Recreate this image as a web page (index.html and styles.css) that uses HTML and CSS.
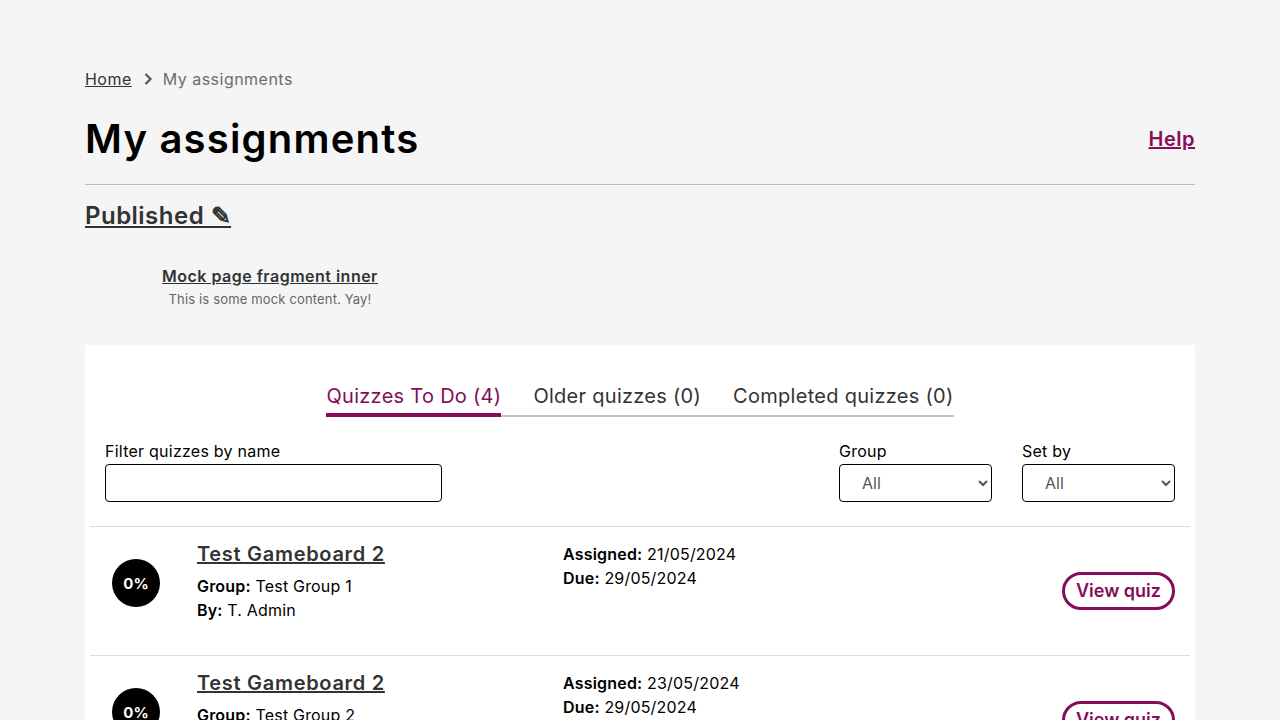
FILE: index.html
```html
<!DOCTYPE html>
<html lang="en">
<head>
<meta charset="utf-8">
<title>My assignments</title>
<link rel="stylesheet" href="styles.css">
</head>
<body>
<div class="page">
  <nav class="breadcrumb">
    <a href="#" class="crumb-link">Home</a>
    <svg class="crumb-sep" width="10" height="14" viewBox="0 0 10 14"><path d="M2.5 2 L7.5 7 L2.5 12" fill="none" stroke="#555" stroke-width="2.2"/></svg>
    <span class="crumb-current">My assignments</span>
  </nav>
  <div class="title-row">
    <h1 class="page-title">My assignments</h1>
    <a href="#" class="help-link">Help</a>
  </div>
  <hr class="title-rule">
  <h2 class="published"><a href="#">Published ✎</a></h2>
  <div class="fragment-row">
    <div class="fragment">
      <a href="#" class="fragment-title">Mock page fragment inner</a>
      <p class="fragment-text">This is some mock content. Yay!</p>
    </div>
  </div>
  <section class="card">
    <ul class="tabs">
      <li class="tab active">Quizzes To Do (4)</li>
      <li class="tab">Older quizzes (0)</li>
      <li class="tab">Completed quizzes (0)</li>
    </ul>
    <div class="filters">
      <label class="field name-field">
        <span class="field-label">Filter quizzes by name</span>
        <input type="text" class="text-input">
      </label>
      <div class="spacer"></div>
      <label class="field select-field">
        <span class="field-label">Group</span>
        <select class="select"><option>All</option></select>
      </label>
      <label class="field select-field">
        <span class="field-label">Set by</span>
        <select class="select"><option>All</option></select>
      </label>
    </div>
    <div class="quiz-list">
      <div class="quiz-row">
        <div class="progress">0%</div>
        <div class="quiz-main">
          <a href="#" class="quiz-title">Test Gameboard 2</a>
          <div class="meta"><b>Group:</b> Test Group 1</div>
          <div class="meta"><b>By:</b> T. Admin</div>
        </div>
        <div class="quiz-dates">
          <div class="meta"><b>Assigned:</b> 21/05/2024</div>
          <div class="meta"><b>Due:</b> 29/05/2024</div>
        </div>
        <div class="quiz-action"><a href="#" class="view-btn">View quiz</a></div>
      </div>
      <div class="quiz-row">
        <div class="progress">0%</div>
        <div class="quiz-main">
          <a href="#" class="quiz-title">Test Gameboard 2</a>
          <div class="meta"><b>Group:</b> Test Group 2</div>
          <div class="meta"><b>By:</b> T. Admin</div>
        </div>
        <div class="quiz-dates">
          <div class="meta"><b>Assigned:</b> 23/05/2024</div>
          <div class="meta"><b>Due:</b> 29/05/2024</div>
        </div>
        <div class="quiz-action"><a href="#" class="view-btn">View quiz</a></div>
      </div>
    </div>
  </section>
</div>
</body>
</html>
```
FILE: styles.css
```css
* { box-sizing: border-box; }
html, body { margin: 0; padding: 0; }
body {
  background: #f5f5f5;
  font-family: Inter, "Noto Sans", sans-serif;
  color: #000;
  font-size: 16px;
}
.page {
  width: 1110px;
  margin: 0 auto;
  padding-top: 67px;
}
.breadcrumb {
  display: flex;
  align-items: center;
  height: 24px;
  font-size: 16px;
  line-height: 24px;
  letter-spacing: 0.03em;
}
.crumb-link { color: #333; text-decoration: underline; }
.crumb-sep { margin: 0 10px 0 11px; }
.crumb-current { color: #686d74; }
.title-row {
  display: flex;
  justify-content: space-between;
  align-items: center;
  margin-top: 24px;
}
.page-title {
  margin: 0;
  font-size: 40px;
  line-height: 48px;
  font-weight: 600;
  letter-spacing: 0.03em;
}
.help-link {
  color: #850d59;
  font-weight: 600;
  font-size: 20px;
  letter-spacing: 0.025em;
  text-decoration: underline;
}
.title-rule {
  margin: 21px 0 0;
  border: 0;
  border-top: 1px solid #bdbdbd;
}
.published {
  margin: 15px 0 0;
  font-size: 24px;
  line-height: 32px;
  font-weight: 600;
  letter-spacing: 0.02em;
}
.published a { color: #333; text-decoration: underline; }
.fragment-row { margin-top: 32px; }
.fragment {
  width: 370px;
  text-align: center;
}
.fragment-title {
  display: block;
  color: #333;
  font-weight: 600;
  font-size: 16px;
  line-height: 24px;
  letter-spacing: 0.03em;
  text-decoration: underline;
}
.fragment-text {
  margin: 2px 0 0;
  font-size: 13px;
  line-height: 18px;
  letter-spacing: 0.012em;
  color: #666;
}
.card {
  margin-top: 37px;
  background: #fff;
  padding: 36px 5px 0;
  min-height: 400px;
}
.tabs {
  list-style: none;
  margin: 0 auto;
  padding: 0;
  display: flex;
  justify-content: center;
  width: max-content;
  border-bottom: 2px solid #c4c4c4;
  gap: 32px;
}
.tab {
  font-size: 20px;
  line-height: 30px;
  letter-spacing: 0.014em;
  color: #333;
  padding-bottom: 2px;
}
.tab.active {
  color: #850d59;
  border-bottom: 4px solid #850d59;
  margin-bottom: -2px;
}
.filters {
  display: flex;
  align-items: flex-end;
  margin-top: 22px;
  padding: 0 15px 24px;
  gap: 30px;
}
.field { display: flex; flex-direction: column; }
.field-label { font-size: 16px; line-height: 24px; margin-bottom: 1px; letter-spacing: 0.015em; }
.name-field { width: 337px; }
.spacer { flex: 1; }
.select-field { width: 153px; }
.text-input, .select {
  height: 38px;
  border: 1px solid #000;
  border-radius: 4px;
  background: #fff;
  font-family: inherit;
  font-size: 16px;
}
.select { padding: 0 8px 0 18px; color: #555; }
.quiz-row {
  display: grid;
  grid-template-columns: 107px 366px 1fr auto;
  border-top: 1px solid #dedede;
  min-height: 129px;
  padding: 13px 15px 0 0;
}
.progress {
  width: 48px;
  height: 48px;
  border-radius: 50%;
  background: #000;
  color: #fff;
  font-weight: 700;
  font-size: 15px;
  display: flex;
  align-items: center;
  justify-content: center;
  margin: 19px 0 0 22px;
}
.quiz-title {
  display: block;
  color: #333;
  font-weight: 600;
  font-size: 20px;
  line-height: 28px;
  letter-spacing: 0.035em;
  text-decoration: underline;
  margin-bottom: 6px;
}
.meta { font-size: 16px; line-height: 24px; letter-spacing: 0.012em; }
.meta b { font-weight: 600; }
.quiz-dates { padding-top: 2px; }
.quiz-action {
  align-self: center;
  margin-top: -13px;
}
.view-btn {
  display: inline-block;
  border: 3px solid #850d59;
  border-radius: 20px;
  color: #850d59;
  font-weight: 600;
  font-size: 18px;
  line-height: 32px;
  padding: 0 11px;
  text-decoration: none;
}
```
